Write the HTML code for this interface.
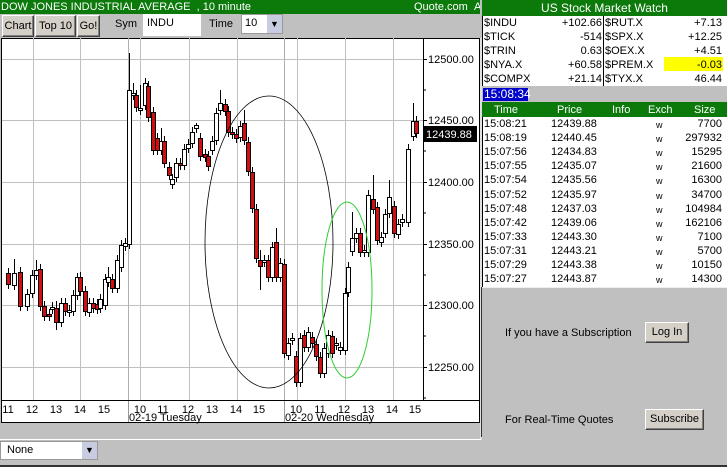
<!DOCTYPE html>
<html><head><meta charset="utf-8"><style>
*{margin:0;padding:0;box-sizing:border-box}
body{width:727px;height:467px;background:#c0c0c0;font-family:"Liberation Sans",Arial,sans-serif;font-size:11px;position:relative;overflow:hidden}
.a{position:absolute;white-space:nowrap}
.btn{position:absolute;background:#d4d0c8;border:1px solid;border-color:#fff #404040 #404040 #fff;box-shadow:inset -1px -1px 0 #808080;font-size:11px;text-align:center;line-height:19px;color:#000}
.g{background:#0b7a0b;color:#fff}
.r{text-align:right}
</style></head><body>
<div class="a g" style="left:0;top:0;width:480px;height:14px;line-height:14px;padding-left:1px;overflow:hidden">DOW JONES INDUSTRIAL AVERAGE &nbsp;, 10 minute<span style="position:absolute;left:414px">Quote.com</span><span style="position:absolute;left:474px">A</span></div>
<div class="btn" style="left:2px;top:15px;width:32px;height:22px;line-height:20px">Chart</div>
<div class="btn" style="left:35px;top:15px;width:41px;height:22px;line-height:20px">Top 10</div>
<div class="btn" style="left:77px;top:15px;width:23px;height:22px;line-height:20px">Go!</div>
<div class="a" style="left:115px;top:18px">Sym</div>
<div class="a" style="left:143px;top:14px;width:58px;height:22px;background:#fff;padding:3px 4px">INDU</div>
<div class="a" style="left:209px;top:18px">Time</div>
<div class="a" style="left:241px;top:14px;width:42px;height:20px;background:#fff;border:1px solid #999;padding:2px 3px">10<div style="position:absolute;right:0;top:0;width:15px;height:18px;background:#c8cce0;text-align:center;font-size:9px;line-height:18px">&#9660;</div></div>

<svg class="a" style="left:0;top:37px" width="482" height="404" viewBox="0 37 482 404">
<rect x="1.5" y="38.5" width="478" height="384" fill="#fff" stroke="#000"/>
<path d="M481 38V439.5H0" stroke="#fff" fill="none"/>
<g stroke="#c0c0c0" stroke-width="1">
<path d="M2 59.5H423M2 120.5H423M2 182.5H423M2 244.5H423M2 305.5H423M2 367.5H423"/>
<path d="M33.5 38V400M80.5 38V400M140.5 38V400M189.5 38V400M237.5 38V400M297.5 38V400M345.5 38V400M393.5 38V400"/>
</g>
<path d="M128.5 38V400M284.5 38V400" stroke="#b0b0b0"/>
<path d="M128.5 400V422M284.5 400V422" stroke="#999"/>
<path d="M423.5 38V400M2 400.5H479" stroke="#000"/>
<g stroke="#000"><path d="M423 59.5h4M423 90h3M423 120.5h4M423 151h3M423 182.5h4M423 213h3M423 244.5h4M423 275h3M423 305.5h4M423 336h3M423 367.5h4M423 398h3"/></g>
<g font-size="11" fill="#000"><text x="428" y="63">12500.00</text><text x="428" y="124">12450.00</text><text x="428" y="186">12400.00</text><text x="428" y="248">12350.00</text><text x="428" y="309">12300.00</text><text x="428" y="371">12250.00</text></g>
<rect x="423" y="126" width="54" height="16" fill="#000"/><text x="426" y="138" fill="#fff" font-size="11">12439.88</text>
<g font-size="11" text-anchor="middle"><text x="8" y="413">11</text><text x="32" y="413">12</text><text x="56" y="413">13</text><text x="80" y="413">14</text><text x="104" y="413">15</text><text x="140" y="413">10</text><text x="163" y="413">11</text><text x="188" y="413">12</text><text x="212" y="413">13</text><text x="236" y="413">14</text><text x="259" y="413">15</text><text x="296" y="413">10</text><text x="320" y="413">11</text><text x="344" y="413">12</text><text x="368" y="413">13</text><text x="392" y="413">14</text><text x="415" y="413">15</text></g>
<text x="129" y="421" font-size="11">02-19 Tuesday</text><text x="285" y="421" font-size="11">02-20 Wednesday</text>
<g id="c" stroke="#000" stroke-width="1"></g>
<ellipse cx="269" cy="242" rx="64" ry="146" fill="none" stroke="#000" stroke-width="0.8"/>
<ellipse cx="347" cy="290" rx="25" ry="88" fill="none" stroke="#3c3" stroke-width="1"/>
</svg>
<div class="a" style="left:0;top:441px;width:98px;height:19px;background:#fff;border:1px solid #999;padding:2px 6px">None<div style="position:absolute;right:0;top:0;width:15px;height:17px;background:#c8cce0;text-align:center;font-size:9px;line-height:17px">&#9660;</div></div>
<div class="a" style="left:0;top:465px;width:727px;height:2px;background:#333"></div>

<div class="a g" style="left:482px;top:0;width:245px;height:16px;line-height:16px;text-align:center;font-size:12px">US Stock Market Watch</div>
<div class="a" style="left:482px;top:16px;width:245px;height:70px;background:#fff;border-left:1px solid #000"></div>
<div class="a" style="left:603px;top:16px;width:1px;height:70px;background:#000"></div>
<div class="a" style="left:664px;top:57px;width:59px;height:14px;background:#ff0"></div>
<div id="w"></div>
<div class="a" style="left:483px;top:88px;width:45px;height:13px;background:#00c;color:#fff;line-height:13px;padding-left:1px;font-size:12px">15:08:34</div>
<div class="a g" style="left:482px;top:102px;width:245px;height:15px"></div>
<div class="a" style="left:482px;top:117px;width:245px;height:170px;background:#fff;border-left:1px solid #000"></div>
<div class="a" style="left:481px;top:287px;width:1px;height:150px;background:#333"></div>
<div class="a" style="left:482px;top:287px;width:245px;height:1px;background:#eee"></div>
<div id="t"></div>
<div class="a" style="left:505px;top:327px">If you have a Subscription</div>
<div class="btn" style="left:645px;top:322px;width:44px;height:21px">Log In</div>
<div class="a" style="left:505px;top:414px">For Real-Time Quotes</div>
<div class="btn" style="left:645px;top:409px;width:59px;height:21px">Subscribe</div>
<script>
var C=[[8,273,284,1,268],[14,273,285,0,259],[20,272,306,1],[27,294,306,0],[32,275,293,0],[36,270,275,0,260],[40,269,306,1],[44,306,316,1],[49,314,316,1],[52,307,309,0],[56,308,322,1,301,330],[61,303,322,0],[65,303,311,1],[69,310,312,0],[73,295,311,0],[77,277,295,0,273],[80,277,291,1],[85,291,311,1],[89,303,312,0],[93,303,308,1],[97,304,309,1],[100,299,308,0],[105,279,305,0],[108,277,282,0,267],[112,279,288,1],[117,260,288,0],[121,245,267,0],[125,243,246,0,238],[129,90,244,0,53],[133,93,95,0,83],[136,95,107,1],[140,108,110,0,85],[145,83,105,0],[148,86,117,1],[153,112,150,1],[157,138,150,1],[161,141,150,0,128],[164,141,163,1],[169,167,175,1],[172,179,184,0],[176,163,177,0],[180,163,165,1],[184,149,165,0],[188,144,148,0],[192,132,143,0],[196,125,128,0,123],[200,138,156,1],[205,154,157,1],[208,156,166,1],[212,141,150,0],[216,113,140,0],[220,103,110,0,90],[225,104,111,1],[228,111,132,1],[232,132,134,1],[236,134,138,1],[240,126,137,0],[244,123,140,1,110],[248,142,171,1],[252,172,208,1],[256,209,258,1],[260,260,266,1,250,290],[264,260,262,0],[268,260,277,1],[272,247,277,0],[276,242,277,1,228],[280,263,277,0],[284,264,353,1],[288,343,355,0],[292,338,340,0],[296,356,382,1],[300,338,382,0],[304,335,347,1],[308,332,347,0],[312,337,343,1],[316,344,356,1],[320,357,373,1],[324,348,373,0],[328,335,353,0],[332,336,353,1],[336,343,345,0],[340,347,350,0],[345,293,350,0],[348,267,292,0],[352,238,251,0,212],[356,233,238,0],[360,233,252,1],[364,250,252,0],[368,195,252,0],[373,199,209,1,175],[377,207,240,1],[381,237,242,0],[385,214,233,0],[389,197,213,0,180],[394,206,233,1],[398,224,234,0],[402,219,222,0],[408,149,222,0],[413,121,136,0,103],[416,121,133,1]];
var s='';C.forEach(function(c){var t=c[4]||c[1]-5,b=c[5]||c[2]+5;s+='<line x1="'+(c[0]+.5)+'" x2="'+(c[0]+.5)+'" y1="'+t+'" y2="'+b+'"/><rect x="'+(c[0]-1.5)+'" y="'+(c[1]+.5)+'" width="4" height="'+Math.max(1,c[2]-c[1])+'" fill="'+(c[3]?'#d01010':'#fff')+'"/>';});
document.getElementById('c').innerHTML=s;
var W=[["$INDU","+102.66","$RUT.X","+7.13"],["$TICK","-514","$SPX.X","+12.25"],["$TRIN","0.63","$OEX.X","+4.51"],["$NYA.X","+60.58","$PREM.X","-0.03"],["$COMPX","+21.14","$TYX.X","46.44"]];
var h='';W.forEach(function(r,i){var y=17+i*14;h+='<div class="a" style="left:484px;top:'+y+'px">'+r[0]+'</div><div class="a r" style="left:530px;width:72px;top:'+y+'px">'+r[1]+'</div><div class="a" style="left:605px;top:'+y+'px">'+r[2]+'</div><div class="a r" style="left:650px;width:72px;top:'+y+'px">'+r[3]+'</div>';});
document.getElementById('w').innerHTML=h;
var T=[["15:08:21","12439.88","7700"],["15:08:19","12440.45","297932"],["15:07:56","12434.83","15295"],["15:07:55","12435.07","21600"],["15:07:54","12435.56","16300"],["15:07:52","12435.97","34700"],["15:07:48","12437.03","104984"],["15:07:42","12439.06","162106"],["15:07:33","12443.30","7100"],["15:07:31","12443.21","5700"],["15:07:29","12443.38","10150"],["15:07:27","12443.87","14300"]];
h='<div class="a" style="left:494px;top:104px;color:#fff">Time</div><div class="a" style="left:557px;top:104px;color:#fff">Price</div><div class="a" style="left:612px;top:104px;color:#fff">Info</div><div class="a" style="left:648px;top:104px;color:#fff">Exch</div><div class="a" style="left:694px;top:104px;color:#fff">Size</div>';
T.forEach(function(r,i){var y=118+i*14.1;h+='<div class="a" style="left:484px;top:'+y+'px">'+r[0]+'</div><div class="a" style="left:551px;top:'+y+'px">'+r[1]+'</div><div class="a" style="left:656px;top:'+y+'px;font-size:9px;line-height:14px">w</div><div class="a r" style="left:650px;width:72px;top:'+y+'px">'+r[2]+'</div>';});
document.getElementById('t').innerHTML=h;
</script>
</body></html>
